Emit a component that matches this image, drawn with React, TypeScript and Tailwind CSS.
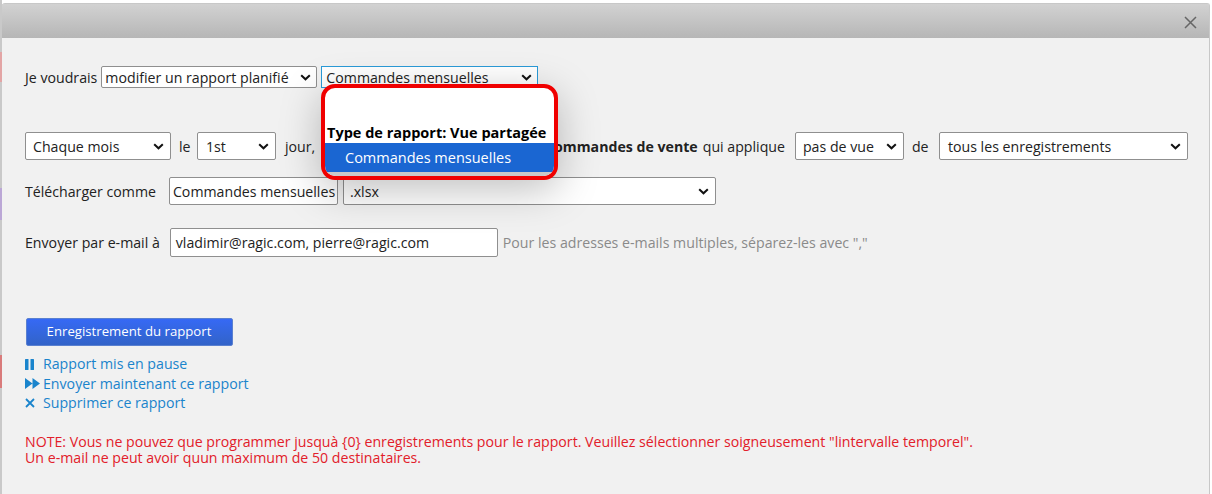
import React from "react";

const chev = (
  <svg width="11" height="7" viewBox="0 0 11 7" className="shrink-0">
    <path d="M1.2 1.2 L5.5 5.3 L9.8 1.2" fill="none" stroke="#111" strokeWidth="2" />
  </svg>
);

function Sel({ text, className = "" }: { text: string; className?: string }) {
  return (
    <div className={"flex items-center justify-between bg-white border border-[#8f8f8f] rounded-[2px] text-[#222] " + className}>
      <span className="whitespace-nowrap pt-[2px]">{text}</span>
      {chev}
    </div>
  );
}

export default function App() {
  return (
    <div className="flex w-[1212px] h-[494px] bg-white overflow-hidden text-[14.17px] text-[#222]" style={{ fontFamily: '"Open Sans", sans-serif' }}>
      <div className="w-[2px] h-full flex flex-col bg-[#c9c9c9] shrink-0">
        <div className="h-[52px]" />
        <div className="h-[30px] bg-[#e3a5a5]" />
        <div className="h-[106px]" />
        <div className="h-[32px] bg-[#bba7d6]" />
        <div className="h-[135px]" />
        <div className="h-[33px] bg-[#d97b7b]" />
      </div>
      <div className="relative w-[1208px] h-[491px] mt-[3px] bg-[#f1f1f1] border-t border-r border-[#c8c8c8] rounded-t-[3px] shrink-0">
        <div className="h-[34px] pt-[2px] bg-gradient-to-b from-[#d2d2d2] to-[#b6b6b6] flex items-center justify-end pr-[12px]">
          <svg width="13" height="13" viewBox="0 0 13 13">
            <path d="M1 1 L12 12 M12 1 L1 12" stroke="#666" strokeWidth="1.5" fill="none" />
          </svg>
        </div>
        <div className="pl-[23px] pr-[20px]">
          <div className="flex items-center mt-[28px] h-[22px]">
            <span className="mr-[4px] pt-[2px]">Je voudrais</span>
            <Sel text="modifier un rapport planifié" className="w-[216px] h-[22px] pl-[3px] pr-[5px]" />
            <Sel text="Commandes mensuelles" className="w-[217px] h-[22px] pl-[4px] pr-[5px] ml-[4px] !border-[#2a9bd8] !rounded-none" />
          </div>
          <div className="flex items-center mt-[44px] h-[28px]">
            <Sel text="Chaque mois" className="w-[146px] h-[28px] pl-[7px] pr-[6px]" />
            <span className="ml-[8px] w-[18px] pt-[2px]">le</span>
            <Sel text="1st" className="w-[79px] h-[28px] pl-[8px] pr-[6px]" />
            <span className="ml-[9px] w-[260px] whitespace-nowrap pt-[1px]">jour,</span>
            <span className="font-bold whitespace-nowrap pt-[2px]">Commandes de vente</span>
            <span className="ml-[5px] whitespace-nowrap pt-[2px]">qui applique</span>
            <Sel text="pas de vue" className="w-[109px] h-[28px] pl-[7px] pr-[6px] ml-[10px]" />
            <span className="ml-[8px] w-[27px] pt-[2px]">de</span>
            <Sel text="tous les enregistrements" className="w-[249px] h-[28px] pl-[8px] pr-[6px]" />
          </div>
          <div className="flex items-center mt-[17px] h-[28px]">
            <span className="whitespace-nowrap pt-[2px]">Télécharger comme</span>
            <div className="ml-[13px] w-[169px] h-[28px] bg-white border border-[#8f8f8f] rounded-[2px] flex items-center pl-[3px] pt-[2px] whitespace-nowrap overflow-hidden">Commandes mensuelles</div>
            <Sel text=".xlsx" className="w-[373px] h-[28px] pl-[6px] pr-[6px] ml-[5px]" />
          </div>
          <div className="flex items-center mt-[23px] h-[29px]">
            <span className="whitespace-nowrap">Envoyer par e-mail à</span>
            <div className="ml-[10px] w-[328px] h-[29px] bg-white border border-[#8f8f8f] rounded-[2px] flex items-center pl-[5px] whitespace-nowrap">vladimir@ragic.com, pierre@ragic.com</div>
            <span className="ml-[5px] text-[#8a8a8a] whitespace-nowrap">Pour les adresses e-mails multiples, séparez-les avec ","</span>
          </div>
          <div className="mt-[61px] ml-[1px] w-[207px] h-[28px] rounded-[2px] bg-gradient-to-b from-[#3669f5] to-[#3263c8] border border-[#5a80d0] text-white text-[13.2px] flex items-center justify-center pr-[1px]">Enregistrement du rapport</div>
          <div className="mt-[8px] flex flex-col text-[#1a84cc]">
            <div className="flex items-center h-[20px]">
              <svg width="9" height="11" viewBox="0 0 9 11" className="mr-[9px]"><rect x="0" y="0" width="3.5" height="11" rx="0.5" fill="#1a84cc" /><rect x="5.5" y="0" width="3.5" height="11" rx="0.5" fill="#1a84cc" /></svg>
              <span>Rapport mis en pause</span>
            </div>
            <div className="flex items-center h-[19px]">
              <svg width="15" height="11" viewBox="0 0 15 11" className="mr-[3px]"><path d="M0 0 L7.5 5.5 L0 11 Z M7.5 0 L15 5.5 L7.5 11 Z" fill="#1a84cc" /></svg>
              <span>Envoyer maintenant ce rapport</span>
            </div>
            <div className="flex items-center h-[20px]">
              <svg width="10" height="10" viewBox="0 0 10 10" className="mr-[8px]"><path d="M1 1 L9 9 M9 1 L1 9" stroke="#1a84cc" strokeWidth="1.8" fill="none" /></svg>
              <span>Supprimer ce rapport</span>
            </div>
          </div>
          <div className="mt-[21px] text-[#e2202a] whitespace-nowrap flex flex-col gap-[0px]">
            <div className="h-[16px] leading-[16px]">NOTE: Vous ne pouvez que programmer jusquà {"{0}"} enregistrements pour le rapport. Veuillez sélectionner soigneusement "lintervalle temporel".</div>
            <div className="h-[16px] leading-[16px]">Un e-mail ne peut avoir quun maximum de 50 destinataires.</div>
          </div>
        </div>
        <div className="absolute left-[319px] top-[80px] w-[237px] h-[96px] bg-white border-[4px] border-[#f00000] rounded-[14px] overflow-hidden shadow-[0_10px_40px_rgba(0,0,0,0.25)] flex flex-col text-[14.5px]">
          <div className="h-[35px]" />
          <div className="h-[20px] font-bold text-black leading-[19px] pl-[2px] whitespace-nowrap">Type de rapport: Vue partagée</div>
          <div className="h-[29px] bg-[#1a66d2] text-white pl-[20px] leading-[30px] whitespace-nowrap">Commandes mensuelles</div>
          <div className="h-[4px] bg-[#c9c9c9]" />
        </div>
      </div>
    </div>
  );
}
